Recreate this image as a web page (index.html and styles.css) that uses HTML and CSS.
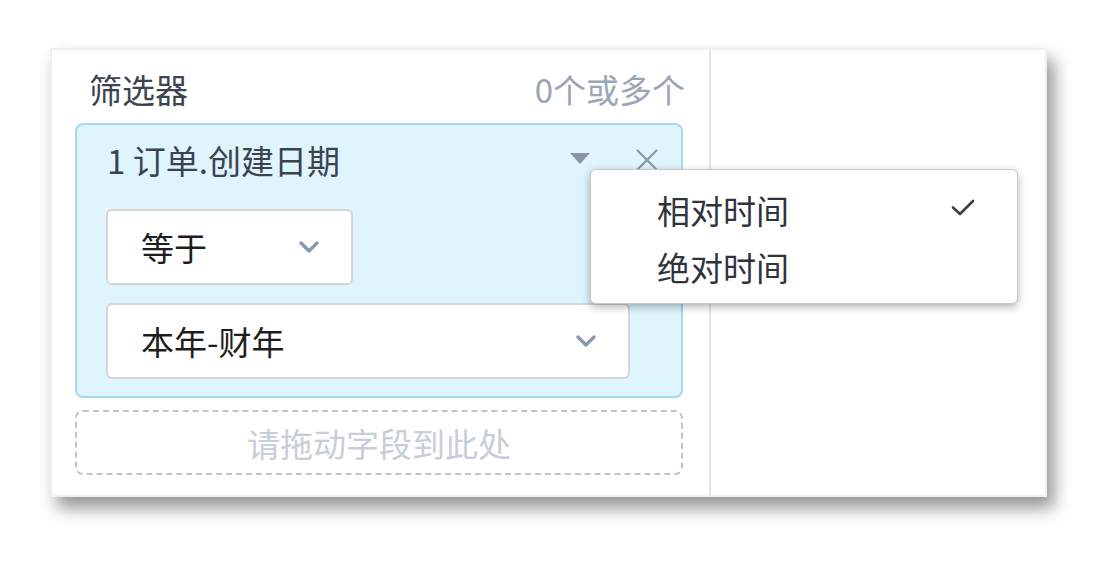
FILE: index.html
```html
<!DOCTYPE html>
<html lang="zh-CN">
<head>
<meta charset="utf-8">
<title>筛选器</title>
<link rel="stylesheet" href="styles.css">
</head>
<body>
<div class="card">
  <div class="left">
    <div class="title-row">
      <span class="title">筛选器</span>
      <span class="count">0个或多个</span>
    </div>
    <div class="filter">
      <div class="filter-head">
        <span class="field">1 订单.创建日期</span>
        <span class="head-icons">
          <svg class="tri" width="20" height="11" viewBox="0 0 20 11"><path d="M0 0H20L10 11Z" fill="#8794a6"/></svg>
          <svg class="close" width="22" height="22" viewBox="0 0 22 22"><path d="M1 1L21 21M21 1L1 21" stroke="#8a96a6" stroke-width="2.2" fill="none"/></svg>
        </span>
      </div>
      <div class="select select-short">
        <span class="sel-text">等于</span>
        <svg class="chev" width="20" height="12" viewBox="0 0 20 12"><path d="M2 2L10 10L18 2" stroke="#8a9aae" stroke-width="3.4" fill="none" stroke-linecap="round" stroke-linejoin="round"/></svg>
      </div>
      <div class="select select-long">
        <span class="sel-text">本年-财年</span>
        <svg class="chev" width="20" height="12" viewBox="0 0 20 12"><path d="M2 2L10 10L18 2" stroke="#8a9aae" stroke-width="3.4" fill="none" stroke-linecap="round" stroke-linejoin="round"/></svg>
      </div>
    </div>
    <div class="dropzone">请拖动字段到此处</div>
  </div>
  <div class="right"></div>
  <div class="menu">
    <div class="menu-item">
      <span>相对时间</span>
      <svg class="check" width="24" height="17" viewBox="0 0 24 17"><path d="M2 8.5L9 15L22 2" stroke="#3a414c" stroke-width="2.6" fill="none" stroke-linecap="round" stroke-linejoin="round"/></svg>
    </div>
    <div class="menu-item">
      <span>绝对时间</span>
    </div>
  </div>
</div>
</body>
</html>
```
FILE: styles.css
```css
html, body {
  margin: 0;
  padding: 0;
  background: #ffffff;
}
body {
  font-family: "Noto Sans CJK SC", "Noto Sans", sans-serif;
  padding: 48px 0 0 50px;
  height: 566px;
  box-sizing: border-box;
  overflow: hidden;
}
.card {
  position: relative;
  width: 997px;
  height: 449px;
  box-sizing: border-box;
  border: 2px solid #efefef;
  background: #fff;
  display: flex;
  box-shadow: 7px 11px 16px rgba(0, 0, 0, 0.42);
}
.left {
  width: 659px;
  box-sizing: border-box;
  border-right: 2px solid #e4e4e4;
  padding: 21px 26px 0 23px;
  display: flex;
  flex-direction: column;
}
.right {
  flex: 1;
}
.title-row {
  height: 36px;
  display: flex;
  justify-content: space-between;
  align-items: center;
  padding: 0 0 0 14px;
  margin-right: -2px;
  font-size: 33px;
  line-height: 36px;
}
.title {
  color: #3d4450;
}
.count {
  color: #9ba6b4;
}
.filter {
  margin-top: 16px;
  height: 275px;
  box-sizing: border-box;
  border: 2px solid #a3d9f4;
  border-radius: 8px;
  background: #dff4fd;
  padding: 17px 0 0 29px;
  display: flex;
  flex-direction: column;
}
.filter-head {
  height: 36px;
  display: flex;
  justify-content: space-between;
  align-items: center;
  padding: 0 23px 0 1px;
  font-size: 33px;
  line-height: 36px;
  color: #3b4350;
}
.head-icons {
  display: flex;
  align-items: center;
  gap: 46px;
}
.tri {
  margin-top: -4px;
}
.select {
  box-sizing: border-box;
  height: 76px;
  border: 2px solid #d6d6d6;
  border-radius: 6px;
  background: #fff;
  display: flex;
  justify-content: space-between;
  align-items: center;
  padding: 0 32px 0 33px;
  font-size: 33px;
  color: #1e1e1e;
}
.select-short {
  width: 247px;
  margin-top: 31px;
}
.select-long {
  width: 524px;
  margin-top: 18px;
}
.sel-text {
  line-height: 36px;
}
.dropzone {
  margin-top: 12px;
  height: 65px;
  box-sizing: border-box;
  border: 2px dashed #b9c5d3;
  border-radius: 8px;
  display: flex;
  align-items: center;
  justify-content: center;
  font-size: 33px;
  color: #c6ced9;
}
.menu {
  position: absolute;
  left: 538px;
  top: 119px;
  width: 428px;
  height: 135px;
  box-sizing: border-box;
  border: 1.5px solid #c9c9c9;
  border-radius: 6px;
  background: #fff;
  box-shadow: 0 3px 8px rgba(0, 0, 0, 0.3);
  padding: 11px 42px 0 66px;
}
.menu-item {
  height: 57px;
  display: flex;
  justify-content: space-between;
  align-items: center;
  font-size: 33px;
  color: #2f343c;
}
.check {
  margin-top: -4px;
}
```
